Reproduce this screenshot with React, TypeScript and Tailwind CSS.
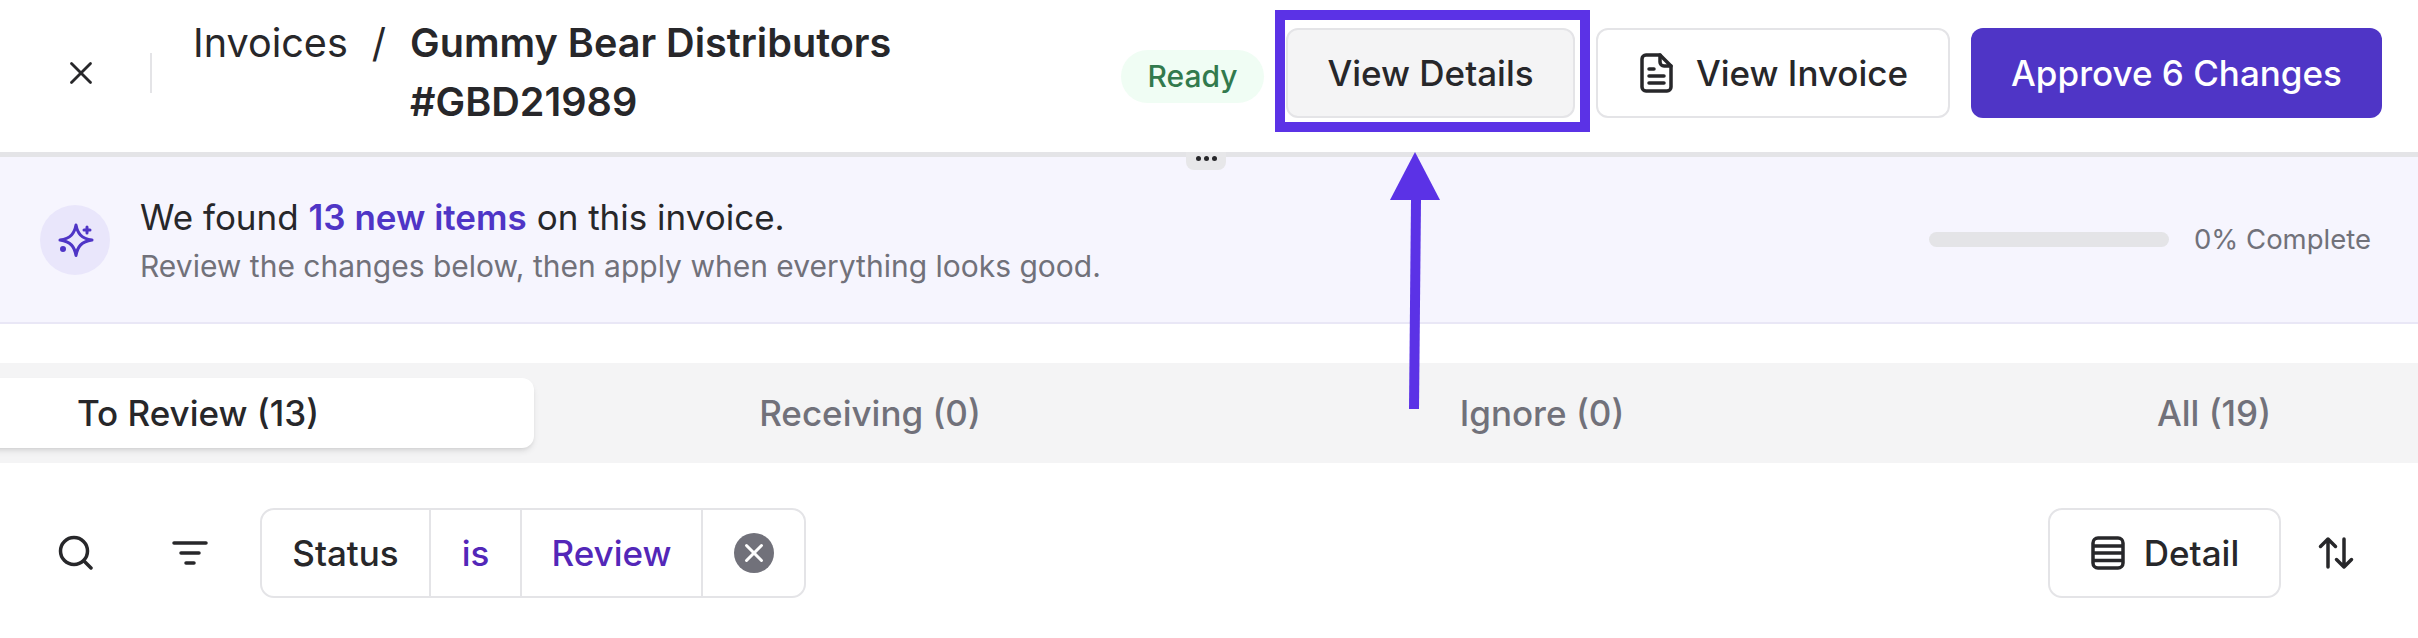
import { X } from "lucide-react"

const tabs = ["To Review (13)", "Receiving (0)", "Ignore (0)", "All (19)"]

function SparkleIcon() {
  return (
    <svg width="40" height="40" viewBox="0 0 40 40" fill="none" stroke="#4f35c6" strokeWidth="3" strokeLinecap="round" strokeLinejoin="round">
      <path d="M21 5c1.500 8 5 13.500 16 15-11 1.500-14.500 7-16 15.500-1.500-8.500-5-14-16-15.500 11-1.500 14.500-7 16-15z" />
      <path d="M32 7v6M29 10h6" />
      <circle cx="8" cy="29" r="1.500" fill="#4f35c6" />
    </svg>
  )
}

function DocIcon() {
  return (
    <svg width="36" height="42" viewBox="0 0 36 42" fill="none" stroke="#27272a" strokeWidth="3.500" strokeLinecap="round" strokeLinejoin="round">
      <path d="M8 3h14l11 11v21a4 4 0 0 1-4 4H8a4 4 0 0 1-4-4V7a4 4 0 0 1 4-4z" />
      <path d="M22 3v7a4 4 0 0 0 4 4h7" />
      <path d="M11 17h5M11 24h15M11 31h15" />
    </svg>
  )
}

function SearchIcon() {
  return (
    <svg width="36" height="36" viewBox="0 0 36 36" fill="none" stroke="#27272a" strokeWidth="3.500" strokeLinecap="round">
      <circle cx="17" cy="16" r="13.500" />
      <path d="M27 26l7 7" />
    </svg>
  )
}

function FilterIcon() {
  return (
    <svg width="36" height="26" viewBox="0 0 36 26" fill="none" stroke="#27272a" strokeWidth="3.500" strokeLinecap="round">
      <path d="M2 3h32M9 13h18M14 23h8" />
    </svg>
  )
}

function RowsIcon() {
  return (
    <svg width="36" height="36" viewBox="0 0 36 36" fill="none" stroke="#27272a" strokeWidth="3.500" strokeLinejoin="round">
      <rect x="3" y="3" width="30" height="30" rx="5" />
      <path d="M3 11h30M3 18h30M3 25.500h30" />
    </svg>
  )
}

function SortIcon() {
  return (
    <svg width="36" height="34" viewBox="0 0 36 34" fill="none" stroke="#27272a" strokeWidth="3.500" strokeLinecap="round" strokeLinejoin="round">
      <path d="M10 31V3M2.500 10.500L10 3l7.500 7.500" />
      <path d="M26 3v28M18.500 23.500L26 31l7.500-7.500" />
    </svg>
  )
}

export default function App() {
  return (
    <div className="relative h-[638px] w-full overflow-hidden bg-white font-['Inter',sans-serif] text-[#27272a]">
      {/* Header */}
      <header className="flex h-[157px] items-start border-b-[5px] border-[#e4e4e7] pl-[62px] pr-[36px]">
        <button className="mt-[54px] flex h-[38px] w-[38px] items-center justify-center">
          <X size={38} strokeWidth={1.75} />
        </button>
        <div className="ml-[50px] mt-[53px] h-[40px] w-[2px] bg-[#e4e4e7]" />
        <div className="ml-[41px] mt-[14px] flex flex-1 items-start text-[39.6px] leading-[59px]">
          <span>Invoices</span>
          <span className="mx-[24px]">/</span>
          <span className="w-[500px] font-semibold">Gummy Bear Distributors #GBD21989</span>
        </div>
        <span className="mt-[50px] flex h-[53px] w-[143px] items-center justify-center rounded-full bg-[#f0fdf4] text-[30px] font-medium text-[#327a4d]">
          Ready
        </span>
        <button className="ml-[22px] mt-[28px] flex h-[90px] w-[289px] items-center justify-center rounded-[12px] border-2 border-[#e4e4e7] bg-[#f4f4f5] text-[35px] font-medium">
          View Details
        </button>
        <button className="ml-[21px] mt-[28px] flex h-[90px] w-[354px] items-center justify-center gap-[22px] rounded-[12px] border-2 border-[#e4e4e7] bg-white text-[35px] font-medium">
          <DocIcon />
          View Invoice
        </button>
        <button className="ml-[21px] mt-[28px] flex h-[90px] w-[411px] items-center justify-center rounded-[12px] bg-[#4f35c6] text-[35px] font-medium text-white">
          Approve 6 Changes
        </button>
      </header>

      {/* Banner */}
      <section className="flex h-[167px] items-center border-b-2 border-[#e9e7f6] bg-[#f6f5fe] pl-[40px] pr-[47px]">
        <div className="flex h-[70px] w-[70px] items-center justify-center rounded-full bg-[#e9e6fb]">
          <SparkleIcon />
        </div>
        <div className="ml-[30px] flex-1">
          <p className="text-[35px] leading-[46px]">
            We found <span className="font-semibold text-[#4f35c6]">13 new items</span> on this invoice.
          </p>
          <p className="mt-[6px] text-[30px] leading-[40px] text-[#71717a]">
            Review the changes below, then apply when everything looks good.
          </p>
        </div>
        <div className="h-[15px] w-[240px] rounded-full bg-[#e4e4e7]" />
        <span className="ml-[25px] text-[27.5px] text-[#71717a]">0% Complete</span>
      </section>

      {/* Tabs */}
      <div className="mt-[39px] h-[100px] overflow-hidden bg-[#f4f4f5] py-[15px]">
        <div className="-ml-[138px] grid w-[2688px] grid-cols-4">
          {tabs.map((tab, i) => (
            <button
              key={tab}
              className={
                i === 0
                  ? "h-[70px] rounded-[12px] bg-white text-[35px] font-medium shadow-md"
                  : "h-[70px] text-[35px] font-medium text-[#71717a]"
              }
            >
              {tab}
            </button>
          ))}
        </div>
      </div>

      {/* Filter row */}
      <div className="mt-[45px] flex items-center pl-[57px] pr-[64px]">
        <SearchIcon />
        <span className="ml-[79px]">
          <FilterIcon />
        </span>
        <div className="ml-[52px] flex h-[90px] items-stretch rounded-[14px] border-2 border-[#e4e4e7] text-[35px] font-medium">
          <span className="flex w-[167px] items-center justify-center">Status</span>
          <span className="flex w-[91px] items-center justify-center border-l-2 border-[#e4e4e7] text-[#5327b8]">is</span>
          <span className="flex w-[181px] items-center justify-center border-l-2 border-[#e4e4e7] text-[#5327b8]">Review</span>
          <span className="flex w-[103px] items-center justify-center border-l-2 border-[#e4e4e7]">
            <span className="flex h-[40px] w-[40px] items-center justify-center rounded-full bg-[#71717a] text-white">
              <X size={30} strokeWidth={2.4} />
            </span>
          </span>
        </div>
        <button className="ml-auto flex h-[90px] w-[233px] items-center justify-center gap-[18px] rounded-[14px] border-2 border-[#e4e4e7] text-[35px] font-medium">
          <RowsIcon />
          Detail
        </button>
        <span className="ml-[37px]">
          <SortIcon />
        </span>
      </div>

      {/* Drag handle */}
      <div className="absolute left-[1186px] top-[152px] flex h-[18px] w-[40px] items-start justify-center gap-[3px] rounded-b-[8px] bg-[#e7e7e9] pt-[4px]">
        <span className="h-[5px] w-[5px] rounded-full bg-[#27272a]" />
        <span className="h-[5px] w-[5px] rounded-full bg-[#27272a]" />
        <span className="h-[5px] w-[5px] rounded-full bg-[#27272a]" />
      </div>

      {/* Annotation */}
      <div className="absolute left-[1275px] top-[10px] h-[122px] w-[315px] border-[10px] border-[#5b32e6]" />
      <svg className="absolute left-[1380px] top-[150px]" width="70" height="265" viewBox="0 0 70 265">
        <polygon points="35,2 60,50 10,50" fill="#5b32e6" />
        <polygon points="31,50 41,50 39,259 29,259" fill="#5b32e6" />
      </svg>
    </div>
  )
}
